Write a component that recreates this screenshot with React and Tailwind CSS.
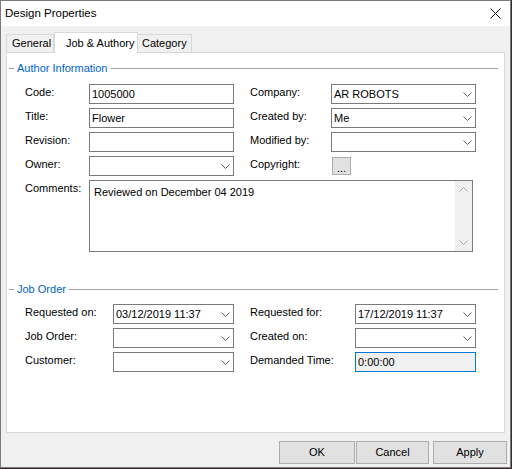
import React from 'react';

const Chevron = () => (
  <svg width="9" height="5" viewBox="0 0 9 5" className="shrink-0">
    <polyline points="0.5,0.5 4.5,4.5 8.5,0.5" fill="none" stroke="#606060" strokeWidth="1" />
  </svg>
);

const TextBox = ({ value, width = 'w-[145px]' }) => (
  <div className={`${width} h-[20px] border border-[#7a7a7a] bg-white flex items-center pl-[2px] text-black`}>
    {value}
  </div>
);

const Combo = ({ value, width = 'w-[145px]' }) => (
  <div className={`${width} h-[20px] border border-[#7a7a7a] bg-white flex items-center justify-between pl-[2px] pr-[3px] text-black`}>
    <span>{value}</span>
    <Chevron />
  </div>
);

const GroupHeader = ({ title }) => (
  <div className="h-[16px] flex items-center pl-[2px] pr-[6px]">
    <div className="w-[5px] h-px bg-[#a0a0a0]" />
    <span className="px-[3px] text-[#0063cc]">{title}</span>
    <div className="flex-1 h-px bg-[#a0a0a0]" />
  </div>
);

const Label = ({ text, width }) => (
  <div className={`${width} pt-[1px] leading-[14px]`}>{text}</div>
);

const DesignProperties = () => {
  return (
    <div className="w-[511px] h-[468px] border border-[#7a7a7a] bg-[#f0f0f0] flex flex-col text-[11px] text-black" style={{ fontFamily: '"Liberation Sans", Arial, sans-serif' }}>
      {/* Title bar */}
      <div className="h-[25px] bg-white flex items-center justify-between pl-[4px] pr-[9px]">
        <span className="text-[11.5px]">Design Properties</span>
        <svg width="11" height="11" viewBox="0 0 11 11">
          <line x1="0.5" y1="0.5" x2="10.5" y2="10.5" stroke="#111" strokeWidth="1" />
          <line x1="10.5" y1="0.5" x2="0.5" y2="10.5" stroke="#111" strokeWidth="1" />
        </svg>
      </div>

      {/* Tabs */}
      <div className="mt-[6px] h-[20px] pl-[5px] flex items-end">
        <div className="w-[48px] h-[18px] border border-b-0 border-[#d9d9d9] bg-[#f0f0f0] flex items-center pl-[5px]">General</div>
        <div className="w-[84px] h-[21px] -mb-px relative z-10 border border-b-0 border-[#d9d9d9] bg-white flex items-start pt-[2px] pl-[11px]">Job &amp; Authory</div>
        <div className="w-[54px] h-[18px] border border-b-0 border-l-0 border-[#d9d9d9] bg-[#f0f0f0] flex items-center pl-[4px]">Category</div>
      </div>

      {/* Panel */}
      <div className="ml-[5px] w-[499px] h-[381px] border border-[#d9d9d9] bg-white pt-[7px]">
        <GroupHeader title="Author Information" />
        <div className="mt-[8px] pl-[18px] flex flex-col gap-[4px]">
          <div className="flex items-start">
            <Label text="Code:" width="w-[64px]" />
            <TextBox value="1005000" />
            <div className="w-[16px]" />
            <Label text="Company:" width="w-[81px]" />
            <Combo value="AR ROBOTS" />
          </div>
          <div className="flex items-start">
            <Label text="Title:" width="w-[64px]" />
            <TextBox value="Flower" />
            <div className="w-[16px]" />
            <Label text="Created by:" width="w-[81px]" />
            <Combo value="Me" />
          </div>
          <div className="flex items-start">
            <Label text="Revision:" width="w-[64px]" />
            <TextBox value="" />
            <div className="w-[16px]" />
            <Label text="Modified by:" width="w-[81px]" />
            <Combo value="" />
          </div>
          <div className="flex items-start">
            <Label text="Owner:" width="w-[64px]" />
            <Combo value="" />
            <div className="w-[16px]" />
            <Label text="Copyright:" width="w-[82px]" />
            <div className="w-[19px] h-[18px] mt-[1px] border border-[#adadad] bg-[#e1e1e1] flex items-end justify-center leading-[12px]">...</div>
          </div>
          <div className="flex items-start">
            <Label text="Comments:" width="w-[64px]" />
            <div className="w-[384px] h-[72px] border border-[#7a7a7a] bg-white flex">
              <div className="flex-1 pl-[4px] pt-[3px]">Reviewed on December 04 2019</div>
              <div className="w-[17px] bg-[#f0f0f0] flex flex-col items-center justify-between py-[6px]">
                <svg width="9" height="5" viewBox="0 0 9 5">
                  <polyline points="0.5,4.5 4.5,0.5 8.5,4.5" fill="none" stroke="#a8a8a8" strokeWidth="1" />
                </svg>
                <svg width="9" height="5" viewBox="0 0 9 5">
                  <polyline points="0.5,0.5 4.5,4.5 8.5,0.5" fill="none" stroke="#a8a8a8" strokeWidth="1" />
                </svg>
              </div>
            </div>
          </div>
        </div>

        <div className="mt-[29px]">
          <GroupHeader title="Job Order" />
        </div>
        <div className="mt-[7px] pl-[18px] flex flex-col gap-[4px]">
          <div className="flex items-start">
            <Label text="Requested on:" width="w-[88px]" />
            <Combo value="03/12/2019 11:37" width="w-[121px]" />
            <div className="w-[16px]" />
            <Label text="Requested for:" width="w-[105px]" />
            <Combo value="17/12/2019 11:37" width="w-[121px]" />
          </div>
          <div className="flex items-start">
            <Label text="Job Order:" width="w-[88px]" />
            <Combo value="" width="w-[121px]" />
            <div className="w-[16px]" />
            <Label text="Created on:" width="w-[105px]" />
            <Combo value="" width="w-[121px]" />
          </div>
          <div className="flex items-start">
            <Label text="Customer:" width="w-[88px]" />
            <Combo value="" width="w-[121px]" />
            <div className="w-[16px]" />
            <Label text="Demanded Time:" width="w-[105px]" />
            <div className="w-[121px] h-[20px] border border-[#0078d7] bg-[#f0f0f0] flex items-center pl-[2px]">0:00:00</div>
          </div>
        </div>
      </div>

      {/* Buttons */}
      <div className="mt-[8px] flex justify-end pr-[3px]">
        <button className="w-[76px] h-[23px] border border-[#adadad] bg-[#e1e1e1]">OK</button>
        <button className="ml-[1px] w-[73px] h-[23px] border border-[#adadad] bg-[#e1e1e1]">Cancel</button>
        <button className="ml-[4px] w-[74px] h-[23px] border border-[#adadad] bg-[#e1e1e1]">Apply</button>
      </div>
    </div>
  );
};

export default function App() {
  return (
    <div className="w-[512px] h-[469px] bg-[#3b2b2b]">
      <DesignProperties />
    </div>
  );
}
